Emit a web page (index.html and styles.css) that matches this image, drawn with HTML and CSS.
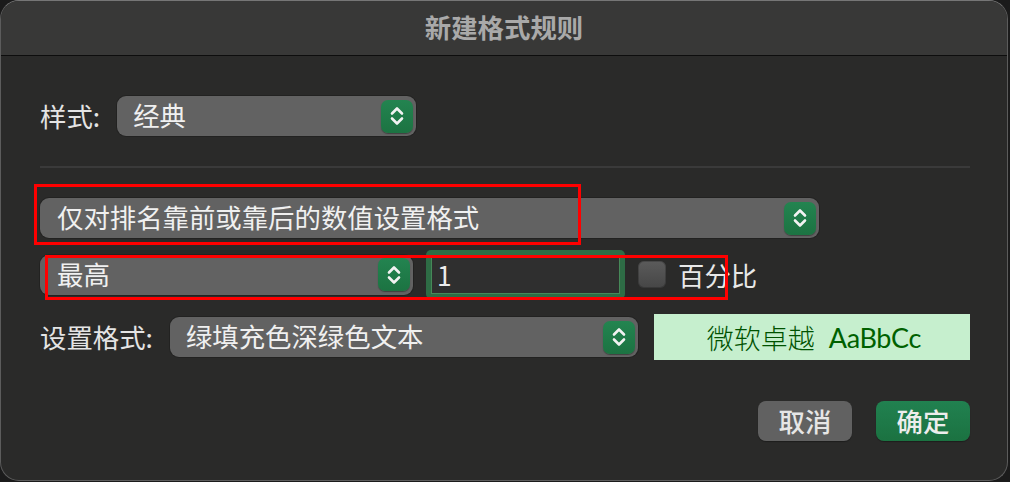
FILE: index.html
```html
<!DOCTYPE html>
<html lang="zh-CN">
<head>
<meta charset="utf-8">
<title>新建格式规则</title>
<link rel="stylesheet" href="styles.css">
</head>
<body>
<div class="window">
  <div class="titlebar">新建格式规则</div>
  <div class="content">
    <div class="row row-style">
      <span class="label">样式:</span>
      <div class="popup popup-style">
        <span class="popup-text">经典</span>
        <span class="stepper"><svg viewBox="0 0 32 32" width="32" height="32"><path d="M11 13.5 L16 8.5 L21 13.5 M11 18.5 L16 23.5 L21 18.5" fill="none" stroke="#f2f2f2" stroke-width="2.6" stroke-linecap="round" stroke-linejoin="round"/></svg></span>
      </div>
    </div>
    <div class="separator"></div>
    <div class="row row-type">
      <div class="popup popup-type">
        <span class="popup-text">仅对排名靠前或靠后的数值设置格式</span>
        <span class="stepper"><svg viewBox="0 0 32 32" width="32" height="32"><path d="M11 13.5 L16 8.5 L21 13.5 M11 18.5 L16 23.5 L21 18.5" fill="none" stroke="#f2f2f2" stroke-width="2.6" stroke-linecap="round" stroke-linejoin="round"/></svg></span>
      </div>
    </div>
    <div class="row row-rank">
      <div class="popup popup-rank">
        <span class="popup-text">最高</span>
        <span class="stepper"><svg viewBox="0 0 32 32" width="32" height="32"><path d="M11 13.5 L16 8.5 L21 13.5 M11 18.5 L16 23.5 L21 18.5" fill="none" stroke="#f2f2f2" stroke-width="2.6" stroke-linecap="round" stroke-linejoin="round"/></svg></span>
      </div>
      <div class="focus-ring">
        <div class="field">1</div>
      </div>
      <span class="checkbox"></span>
      <span class="check-label">百分比</span>
    </div>
    <div class="row row-format">
      <span class="label">设置格式:</span>
      <div class="popup popup-format">
        <span class="popup-text">绿填充色深绿色文本</span>
        <span class="stepper"><svg viewBox="0 0 32 32" width="32" height="32"><path d="M11 13.5 L16 8.5 L21 13.5 M11 18.5 L16 23.5 L21 18.5" fill="none" stroke="#f2f2f2" stroke-width="2.6" stroke-linecap="round" stroke-linejoin="round"/></svg></span>
      </div>
      <div class="preview"><span class="preview-cjk">微软卓越</span><span class="preview-latin">AaBbCc</span></div>
    </div>
    <div class="buttons">
      <button class="btn btn-cancel">取消</button>
      <button class="btn btn-ok">确定</button>
    </div>
  </div>
  <div class="mark mark-1"></div>
  <div class="mark mark-2"></div>
</div>
</body>
</html>
```
FILE: styles.css
```css
html, body {
  margin: 0;
  padding: 0;
  background: #1b1b1b;
  width: 1010px;
  height: 482px;
  overflow: hidden;
}

.window {
  position: relative;
  box-sizing: border-box;
  width: 1008px;
  height: 481px;
  border: 1px solid #5c5c5c;
  border-top-color: #767676;
  border-radius: 19px;
  overflow: hidden;
  background: #2a2a29;
  font-family: "Noto Sans CJK SC", "Noto Sans", sans-serif;
  font-size: 26.4px;
  color: #e8e8e8;
}

.titlebar {
  height: 55px;
  background: #383837;
  border-bottom: 1px solid #0d0d0d;
  display: flex;
  align-items: center;
  justify-content: center;
  font-weight: 700;
  color: #a9a9a9;
  line-height: 1;
  padding-bottom: 1px;
  box-sizing: border-box;
}

.content {
  padding: 0 37px 0 39px;
  display: flex;
  flex-direction: column;
}

.row {
  display: flex;
  align-items: center;
}

.label {
  color: #e4e4e4;
  line-height: 40px;
  margin-right: 17px;
}

.popup {
  box-sizing: border-box;
  height: 40px;
  background: #626262;
  border-radius: 9px;
  box-shadow: 0 0 0 1px rgba(0, 0, 0, 0.18);
  display: flex;
  align-items: center;
  justify-content: space-between;
  padding: 0 3px 0 16px;
}

.popup-text {
  color: #f0f0f0;
  line-height: 40px;
  white-space: nowrap;
  margin-top: -2px;
}

.stepper {
  width: 32px;
  height: 33px;
  border-radius: 7px;
  background: linear-gradient(#238450, #1c7342);
  box-shadow: 0 1px 1px rgba(0, 0, 0, 0.35);
  display: flex;
  align-items: center;
  justify-content: center;
}

.stepper svg {
  display: block;
}

.row-style {
  margin-top: 40px;
}

.popup-style {
  width: 299px;
}

.separator {
  height: 2px;
  background: #3a3a3a;
  margin-top: 30px;
}

.row-type {
  margin-top: 30px;
}

.popup-type {
  width: 779px;
  padding-left: 17px;
}

.row-rank {
  margin-top: 12px;
  height: 49px;
}

.popup-rank {
  width: 373px;
  padding-left: 17px;
}

.focus-ring {
  margin-left: 13px;
  box-sizing: border-box;
  width: 199px;
  height: 49px;
  padding: 5px;
  background: #2e6c45;
  border-radius: 5px;
}

.field {
  box-sizing: border-box;
  height: 39px;
  border: 1px solid #468858;
  background: #2f2f2f;
  color: #ececec;
  line-height: 37px;
  padding-left: 5px;
}

.checkbox {
  margin-left: 13px;
  box-sizing: border-box;
  width: 28px;
  height: 27px;
  border-radius: 6px;
  background: linear-gradient(#5b5b5b, #464646);
  box-shadow: inset 0 0 0 1px rgba(0, 0, 0, 0.2);
}

.check-label {
  margin-left: 12px;
  color: #e8e8e8;
}

.row-format {
  margin-top: 15px;
  height: 46px;
}

.popup-format {
  width: 468px;
}

.preview {
  margin-left: 16px;
  width: 316px;
  height: 46px;
  background: #c6efce;
  color: #006100;
  display: flex;
  align-items: center;
  justify-content: center;
  padding-left: 4px;
  box-sizing: border-box;
}

.preview-cjk {
  font-weight: 300;
  font-size: 27px;
  color: #005200;
}

.preview-latin {
  font-family: "Lato", "Open Sans", sans-serif;
  font-size: 27px;
  margin-left: 14px;
  letter-spacing: -0.3px;
}

.buttons {
  display: flex;
  justify-content: flex-end;
  gap: 24px;
  margin-top: 41px;
}

.btn {
  width: 94px;
  height: 40px;
  border: none;
  border-radius: 8px;
  font-family: "Noto Sans CJK SC", sans-serif;
  font-size: 26.4px;
  font-weight: 500;
  color: #e6e6e6;
  padding: 0;
  line-height: 40px;
  box-shadow: 0 1px 1px rgba(0, 0, 0, 0.3);
}

.btn-cancel {
  background: #616161;
}

.btn-ok {
  background: linear-gradient(#218150, #1b7241);
  color: #ededed;
}

.mark {
  position: absolute;
  box-sizing: border-box;
  border: 3px solid #ff0000;
}

.mark-1 {
  left: 33px;
  top: 183px;
  width: 547px;
  height: 61px;
}

.mark-2 {
  left: 44px;
  top: 254px;
  width: 683px;
  height: 45px;
}
```
